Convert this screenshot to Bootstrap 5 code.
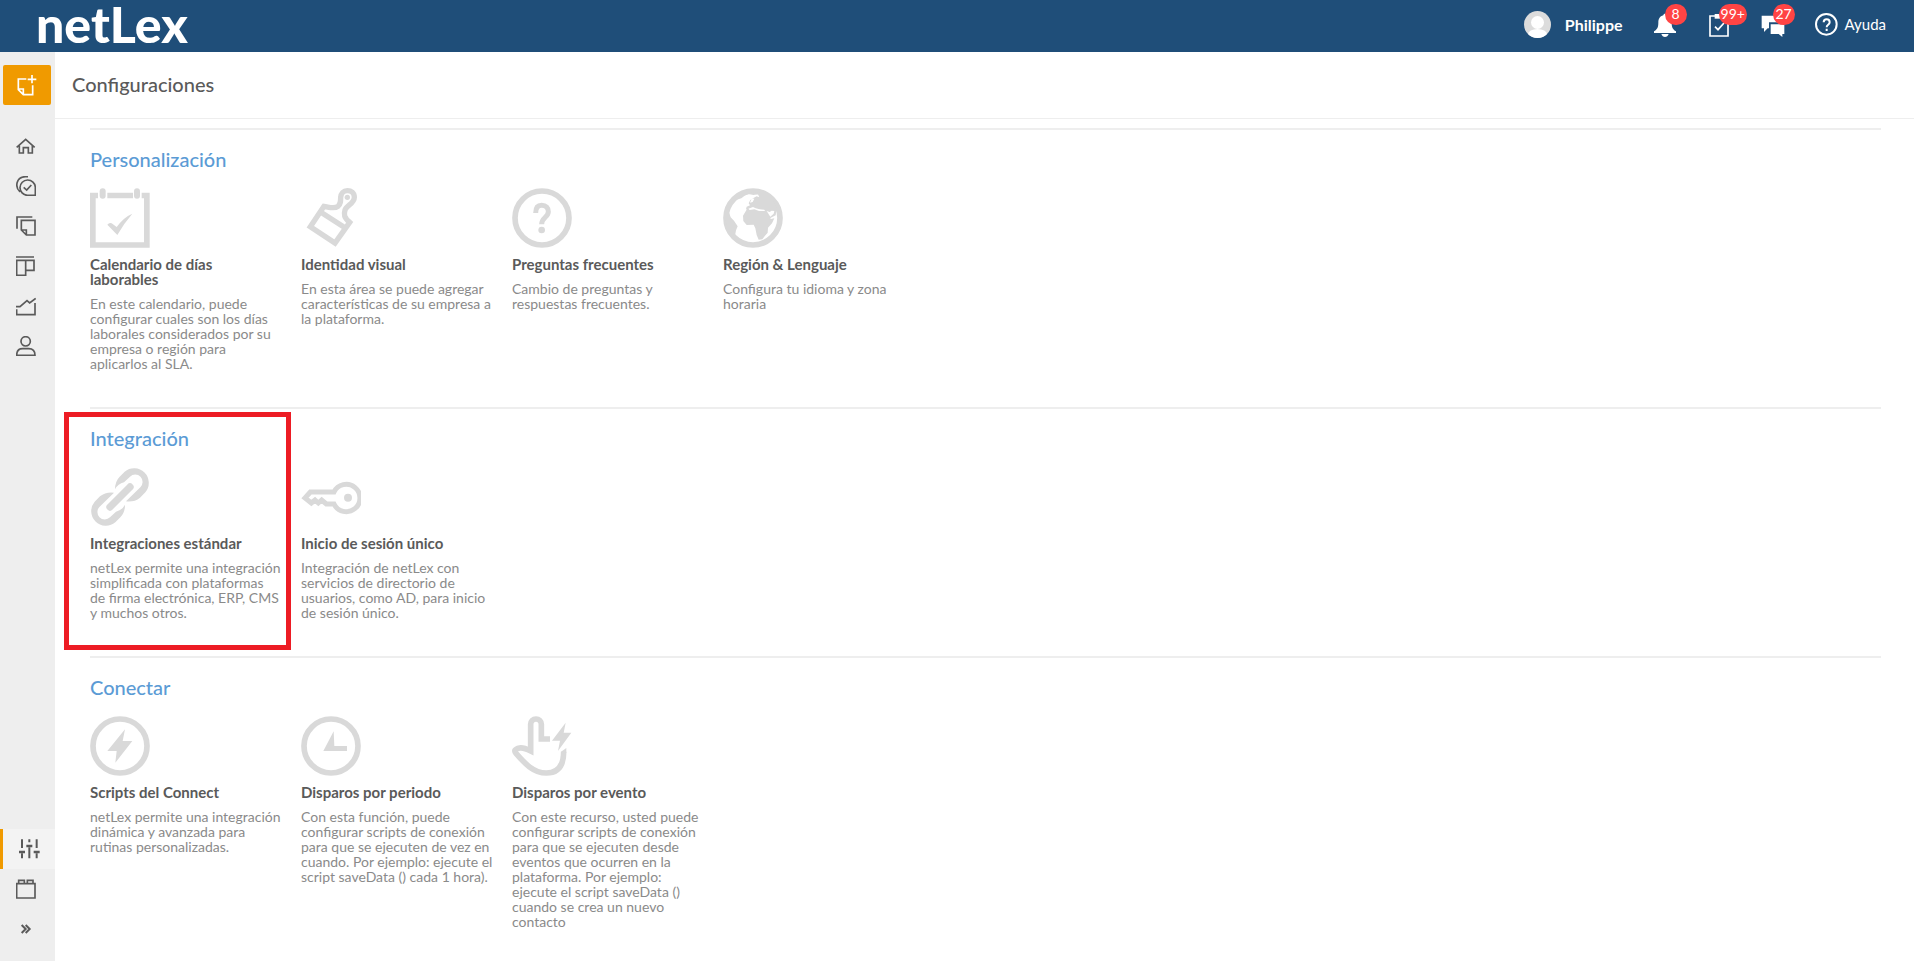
<!DOCTYPE html>
<html lang="es">
<head>
<meta charset="utf-8">
<meta name="viewport" content="width=device-width, initial-scale=1">
<title>netLex - Configuraciones</title>
<link href="https://cdn.jsdelivr.net/npm/bootstrap@5.3.0/dist/css/bootstrap.min.css" rel="stylesheet">
<style>
body { font-family: Lato, "Liberation Sans", sans-serif; color: #5a5a5a; background: #fff; }
a { color: inherit; text-decoration: none; }
svg { display: block; }
.topbar { height: 52px; background: #1f4e79; color: #fff; padding: 0 28px 3px 36px; }
.brand { font-size: 50px; line-height: 49px; font-weight: 900; }
.user { gap: 14px; font-size: 16px; font-weight: 700; }
.top-actions { gap: 30px; font-size: 15px; }
.icon-btn { width: 24px; height: 24px; padding: 0; border: 0; background: none; color: #fff; }
.counter { top: -9px; left: 12px; min-width: 22px; height: 21px; padding: 0 2px; border-radius: 11px; background: #ff4444; font-size: 14px; line-height: 20px; }
.help { gap: 7px; }
.sidebar { width: 55px; background: #eee; padding: 13px 0 12px; }
.new-btn { width: 48px; height: 40px; margin: 0 3px 21px; border: 0; border-radius: 2px; background: #f09a00; color: #fff; }
.side-link { height: 40px; padding-left: 16px; color: #5a5a5a; }
.side-link.current { background: #f3f3f3; border-left: 3px solid #f09a00; }
.line-icon { fill: none; stroke: currentColor; stroke-width: 5; }
.page-head { height: 67px; padding: 0 0 2px 17px; border-bottom: 1px solid #eee; }
.page-head h1 { font-size: 20px; line-height: 24px; font-weight: 500; }
.settings { padding: 9px 33px 0 35px; }
.group { border-top: 2px solid #eee; padding: 16px 0 36px; }
.group h2 { font-size: 20px; line-height: 26px; font-weight: 500; color: #5b9bd5; margin-bottom: 16px; }
.tiles { display: grid; grid-template-columns: repeat(auto-fill, 194px); gap: 17px; }
.tile h3 { font-size: 15px; line-height: 15px; font-weight: 700; margin: 9px 0; color: #5a5a5a; }
.tile p { font-size: 14px; line-height: 15px; color: #8a8a8a; margin: 0; }
.tile-icon { width: 60px; height: 60px; fill: #d9d9d9; stroke: none; }
.tile-icon .o { fill: none; stroke: #d9d9d9; stroke-width: 17; }
.highlight { top: 3px; bottom: 6px; left: -26px; width: 227px; border: 5px solid #ed1c24; pointer-events: none; }
</style>
</head>
<body class="d-flex flex-column min-vh-100">
<header class="topbar d-flex align-items-center justify-content-between">
  <a href="#" class="brand">netLex</a>
  <div class="top-actions d-flex align-items-center">
    <a href="#" class="user d-flex align-items-center">
      <svg width="27" height="27" viewBox="0 0 54 54"><defs><clipPath id="av"><circle cx="27" cy="27" r="27"/></clipPath></defs><g clip-path="url(#av)"><path fill="#dcdcdc" d="M0 0h54v54H0z"/><circle cx="27" cy="23" r="13" fill="#fff"/><ellipse cx="27" cy="47" rx="19" ry="11" fill="#fff"/></g></svg>
      <span>Philippe</span>
    </a>
    <button type="button" class="icon-btn position-relative" aria-label="Notificaciones">
      <svg width="24" height="24" viewBox="0 0 72 72" fill="#fff"><path d="M36 2c3 0 5 2 5 5 11 3 15 11 15 22 0 15 4 20 13 26v5H3v-5c9-6 13-11 13-26C16 18 20 10 31 7c0-3 2-5 5-5zM25 63h22c-2 6-6 9-11 9s-9-3-11-9z"/></svg>
      <span class="counter position-absolute">8</span>
    </button>
    <button type="button" class="icon-btn position-relative" aria-label="Tareas">
      <svg width="24" height="24" viewBox="0 0 72 72" fill="none" stroke="#fff" stroke-width="5"><path d="M9 9h54v60H9z"/><path d="M23 3h26v14H23z" fill="#fff" stroke="none"/><path d="M24 41l9 9 18-20"/></svg>
      <span class="counter position-absolute">99+</span>
    </button>
    <button type="button" class="icon-btn position-relative" aria-label="Mensajes">
      <svg width="24" height="24" viewBox="0 0 72 72" fill="#fff"><path d="M2 8h48v20H24v18h-4L9 57V46H2z"/><path d="M29 34h41v29h-6v9L53 63H29z"/></svg>
      <span class="counter position-absolute">27</span>
    </button>
    <a href="#" class="help d-flex align-items-center">
      <svg width="23" height="23" viewBox="0 0 69 69" fill="none" stroke="#fff" stroke-width="6"><circle cx="34" cy="34" r="31"/><path d="M26 28c0-12 18-12 18 0 0 8-9 7-9 15M35 47v7"/></svg>
      <span>Ayuda</span>
    </a>
  </div>
</header>
<div class="d-flex flex-grow-1">
  <nav class="sidebar d-flex flex-column flex-shrink-0" aria-label="Principal">
    <button type="button" class="new-btn d-flex align-items-center justify-content-center" aria-label="Nuevo">
      <svg class="line-icon" width="20" height="22" viewBox="56 222 60 66"><path d="M84 237H60V269L75 284H103V256M60 267H75V284M101 225V250M88 238H114"/></svg>
    </button>
    <a href="#" class="side-link d-flex align-items-center" aria-label="Inicio"><svg class="line-icon" width="20" height="20" viewBox="48 50 60 60"><path d="M50 84L77 60l27 24M58 79v22h12V85h15v16h12V79"/></svg></a>
    <a href="#" class="side-link d-flex align-items-center" aria-label="Aprobaciones"><svg class="line-icon" width="20" height="20" viewBox="48 168 60 60"><path d="M106 226H82a23 23 0 1 1 24-24zM71 202l9 8 14-15M60 216C44 201 48 171 76 170h8"/></svg></a>
    <a href="#" class="side-link d-flex align-items-center" aria-label="Documentos"><svg class="line-icon" width="20" height="20" viewBox="48 288 60 60"><path d="M64 301h41v44H79L64 330zM64 330h15v15M51 326V291h46"/></svg></a>
    <a href="#" class="side-link d-flex align-items-center" aria-label="Tablero"><svg class="line-icon" width="20" height="20" viewBox="48 408 60 60"><path d="M48 411h54M50 421h27v45H50zM77 421h25v30H77z"/></svg></a>
    <a href="#" class="side-link d-flex align-items-center" aria-label="Informes"><svg class="line-icon" width="20" height="20" viewBox="48 529 60 60"><path d="M48 561h12l21-18 8 7 18-14M50 569v16h55V550"/></svg></a>
    <a href="#" class="side-link d-flex align-items-center" aria-label="Usuarios"><svg class="line-icon" width="20" height="20" viewBox="48 648 60 60"><circle cx="77" cy="664" r="14"/><path d="M50 706c0-15 8-20 18-20h18c12 0 19 6 19 20z"/></svg></a>
    <div class="mt-auto">
      <a href="#" class="side-link current d-flex align-items-center" aria-label="Configuraciones" aria-current="page"><svg class="line-icon" width="21" height="20" viewBox="57 86 63 60"><g stroke-width="6"><path d="M66 87v26M66 129v15M88 87v9M88 111v33M110 87v26M110 129v15"/><path stroke-width="7" d="M57 125h18M79 107h18M101 125h18"/></g></svg></a>
      <a href="#" class="side-link d-flex align-items-center" aria-label="Módulos"><svg class="line-icon" width="20" height="20" viewBox="48 206 60 60"><path d="M50 220h55v43H50zM56 217v-7h17v7M82 217v-7h17v7"/></svg></a>
      <a href="#" class="side-link d-flex align-items-center" aria-label="Expandir"><svg class="line-icon" width="20" height="20" viewBox="48 328 60 60"><path stroke-width="6" d="M65 346l12 12-12 12M77 346l12 12-12 12"/></svg></a>
    </div>
  </nav>
  <main class="flex-grow-1">
    <div class="page-head d-flex align-items-center"><h1 class="m-0">Configuraciones</h1></div>
    <div class="settings">
      <section class="group">
        <h2>Personalización</h2>
        <div class="tiles">
          <a href="#" class="tile">
            <svg class="tile-icon" viewBox="0 0 180 180"><path d="M0 14h24v17h-7v132h145V31h-7V14h24v165H0zM52 14h77v17H52z"/><rect x="29" y="1" width="18" height="31" rx="9"/><rect x="132" y="1" width="18" height="31" rx="9"/><path d="M52 110q6-8 13-4l15 11q22-30 47-40-26 30-45 64z"/></svg>
            <h3>Calendario de días laborables</h3>
            <p>En este calendario, puede configurar cuales son los días laborales considerados por su empresa o región para aplicarlos al SLA.</p>
          </a>
          <a href="#" class="tile">
            <svg class="tile-icon" viewBox="0 0 180 180"><path class="o" style="stroke-width:16" d="M69 55L28 116l74 49 44-62C129 88 128 80 132 66c4-14 28-18 28-38 0-14-9-20-21-20-12 0-19 9-20 20 0 12 0 20-8 27-12 9-27 2-42 0zM54 69l78 50"/><circle cx="139" cy="28" r="8"/></svg>
            <h3>Identidad visual</h3>
            <p>En esta área se puede agregar características de su empresa a la plataforma.</p>
          </a>
          <a href="#" class="tile">
            <svg class="tile-icon" viewBox="0 0 180 180"><circle class="o" cx="90" cy="90" r="81"/><path class="o" style="stroke-width:15" d="M71 75c0-15 6-23 18-23 13 0 20 8 20 19 0 17-20 17-20 38"/><circle cx="89" cy="126" r="10"/></svg>
            <h3>Preguntas frecuentes</h3>
            <p>Cambio de preguntas y respuestas frecuentes.</p>
          </a>
          <a href="#" class="tile">
            <svg class="tile-icon" viewBox="0 0 180 180"><circle class="o" cx="90" cy="90" r="81"/><path d="M10 66l9 10 4 12 10 10 11 17-5 12-3 16-20-14-10-35z"/><path d="M39 36l16-15 22-9 35 2 33 20 24 35-9-1-2 14-12 6-8 5-12-7-9-14-7-7-13 1-9 5-9-6-10-1 2-8 10-4-4-6 5-10 8-5 11-6 8 3-4-9-14 2-14-3-12 5-10 8z"/><path d="M60 83l12-20 20-4 14 6 20 3 10 17 8 8 10-2-7 15-12 13-1 15-8 9-8 11-11 1-6-14-4-20-5-11-21 1-10-12z"/><path fill="#fff" d="M131 69l11 17 10-9 2-8-8-1-6 4zM86 31l8 1-5 10-8 2zM76 62l14-5 8 4 12 3 14 1 2 4-18 0-14-5-14 2z"/></svg>
            <h3>Región &amp; Lenguaje</h3>
            <p>Configura tu idioma y zona horaria</p>
          </a>
        </div>
      </section>
      <section class="group position-relative">
        <div class="highlight position-absolute"></div>
        <h2>Integración</h2>
        <div class="tiles">
          <a href="#" class="tile">
            <svg class="tile-icon" viewBox="0 0 180 180"><defs><path id="chain" d="M104 14A44 44 0 0 1 166 76L150 92Q133 106 108 103L151 61A22 22 0 0 0 120 29L102 46Q84 50 75 67 75 43 89 29z"/></defs><use href="#chain"/><use href="#chain" transform="rotate(180 90 90)"/><path d="M60 120l60-60" fill="none" stroke="#d9d9d9" stroke-width="22" stroke-linecap="round"/></svg>
            <h3>Integraciones estándar</h3>
            <p>netLex permite una integración simplificada con plataformas de&nbsp;firma electrónica, ERP, CMS y&nbsp;muchos otros.</p>
          </a>
          <a href="#" class="tile">
            <svg class="tile-icon" viewBox="0 0 180 180"><path class="o" style="stroke-width:15" d="M99 75H28L12 93l19 15 11-9 10 9 10-9 14 12h23a41 41 0 1 0 0-36z"/><circle cx="141" cy="92" r="12"/></svg>
            <h3>Inicio de sesión único</h3>
            <p>Integración de netLex con servicios de directorio de usuarios, como AD, para inicio de sesión único.</p>
          </a>
        </div>
      </section>
      <section class="group pb-0">
        <h2>Conectar</h2>
        <div class="tiles">
          <a href="#" class="tile">
            <svg class="tile-icon" viewBox="0 0 180 180"><circle class="o" cx="90" cy="90" r="81"/><path d="M105 40L52 105h28l-4 35 51-65H98z"/></svg>
            <h3>Scripts del Connect</h3>
            <p>netLex permite una integración dinámica y avanzada para rutinas personalizadas.</p>
          </a>
          <a href="#" class="tile">
            <svg class="tile-icon" viewBox="0 0 180 180"><circle class="o" cx="90" cy="90" r="81"/><path d="M98 46l-31 59h71V90h-38z"/></svg>
            <h3>Disparos por periodo</h3>
            <p>Con esta función, puede configurar scripts de conexión para que se ejecuten de vez en cuando. Por ejemplo: ejecute el script saveData () cada 1 hora).</p>
          </a>
          <a href="#" class="tile">
            <svg class="tile-icon" viewBox="0 0 180 180"><path class="o" d="M114 69H88V25a16 16 0 0 0-32 0v80C44 99 34 94 23 96c-16 3-17 9-11 16 26 30 52 59 91 59 41 0 52-30 52-64"/><path d="M161 20l-41 54h24l-6 31 40-55h-23z"/><path d="M146 108l17-12v14z"/></svg>
            <h3>Disparos por evento</h3>
            <p>Con este recurso, usted puede configurar scripts de conexión para que se ejecuten desde eventos que ocurren en la plataforma. Por ejemplo: ejecute el script saveData () cuando se crea un nuevo contacto</p>
          </a>
        </div>
      </section>
    </div>
  </main>
</div>
<script src="https://cdn.jsdelivr.net/npm/bootstrap@5.3.0/dist/js/bootstrap.bundle.min.js"></script>
</body>
</html>
